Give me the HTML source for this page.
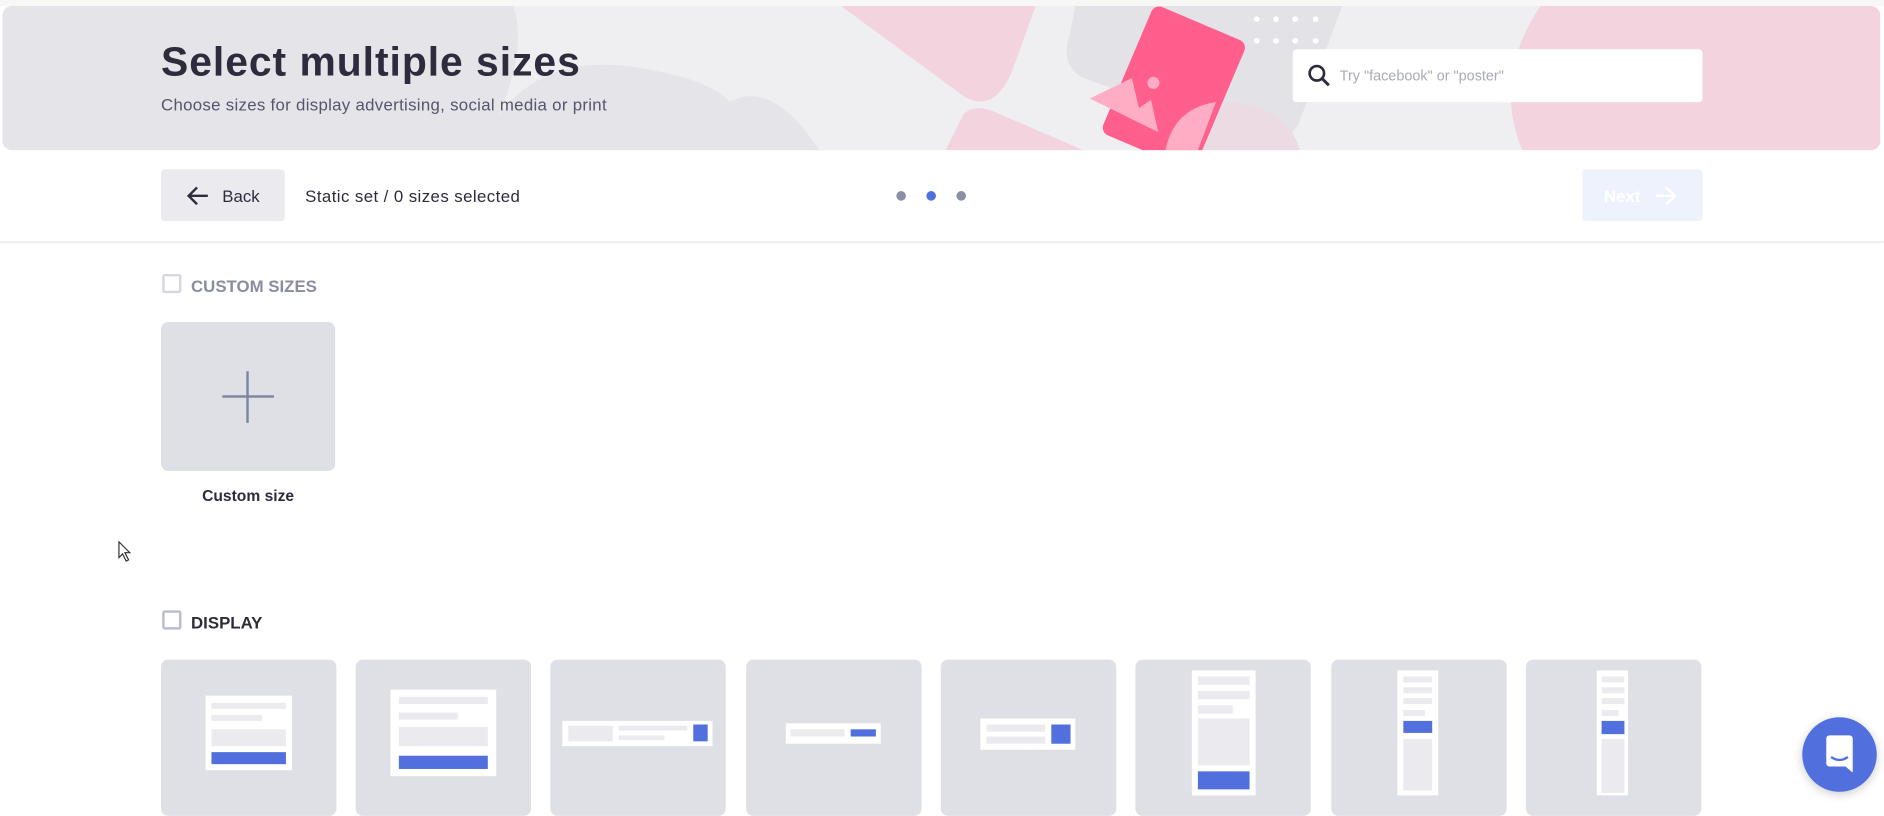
<!DOCTYPE html>
<html><head><meta charset="utf-8"><style>
html,body{margin:0;padding:0;background:#fff;overflow:hidden;width:1884px;height:801px}
#w{position:absolute;left:0;top:0;width:1568px;height:667px;transform:scale(1.2015);transform-origin:0 0;font-family:"Liberation Sans",sans-serif}
.a{position:absolute}
.tile{position:absolute;top:549px;width:146px;height:130px;background:#dfe0e6;border-radius:6px}
.wt{position:absolute;background:#fff}
.g{position:absolute;background:#ebebef}
.b{position:absolute;background:#5170dd}
</style></head><body><div id="w">
<div class="a" style="left:0;top:0;width:1568px;height:5px;background:#f7f7f8"></div>
<div class="a" style="left:2px;top:5px;width:1563px;height:120px;border-radius:8px;overflow:hidden;background:#efeff2">
<svg width="1563" height="120" style="position:absolute;left:0;top:0">
<path d="M0 0 H425 Q440 40 400 120 H0Z" fill="#e4e4e9"/>
<path d="M398 120 Q430 40 520 50 Q590 60 605 80 Q640 60 680 120Z" fill="#e4e4e9"/>
<path d="M698 0 H860 L840 55 Q825 90 800 75 Z" fill="#f2d3de"/>
<path d="M785 120 L800 90 Q810 80 830 90 L900 120Z" fill="#f2d3de"/>
<path d="M893 0 H1115 L1080 95 Q1070 118 1045 110 L900 60 Q880 50 888 25Z" fill="#e2e2e7"/>
<path d="M975 120 Q990 80 1025 80 Q1070 85 1080 120Z" fill="#ecdbe3"/>
<path d="M1280 0 H1563 V120 H1265 Q1240 60 1280 0Z" fill="#f2d3de"/>
<g transform="translate(975 68) rotate(23)"><rect x="-42" y="-58" width="84" height="116" rx="7" fill="#ff5f8c"/></g>
<path d="M905 77 L940 60 L946 85 L956 78 L962 105 Z" fill="#ffadc4"/>
<circle cx="958" cy="64" r="5" fill="#ffadc4"/>
<path d="M968 120 Q975 85 1010 80 L995 120Z" fill="#ffadc4"/>
<g fill="#fff"><circle cx="1044" cy="11" r="2.4"/><circle cx="1060" cy="11" r="2.4"/><circle cx="1076" cy="11" r="2.4"/><circle cx="1093" cy="11" r="2.4"/><circle cx="1044" cy="29" r="2.4"/><circle cx="1060" cy="29" r="2.4"/><circle cx="1076" cy="29" r="2.4"/><circle cx="1093" cy="29" r="2.4"/></g>
</svg>
</div>
<div class="a" style="left:134px;top:33px;font-size:34px;font-weight:bold;color:#2e2b3d;letter-spacing:0.8px">Select multiple sizes</div>
<div class="a" style="left:134px;top:79px;font-size:14px;color:#55566a;letter-spacing:0.25px">Choose sizes for display advertising, social media or print</div>
<div class="a" style="left:1076px;top:41px;width:341px;height:44px;background:#fff;border-radius:3px">
<svg width="22" height="22" style="position:absolute;left:12px;top:12px"><circle cx="8" cy="8" r="6" fill="none" stroke="#2e2b3d" stroke-width="2.2"/><path d="M12.5 12.5 L18 18" stroke="#2e2b3d" stroke-width="2.4"/></svg>
<div class="a" style="left:39px;top:15px;font-size:12px;color:#a9aab8">Try "facebook" or "poster"</div></div>
<div class="a" style="left:134px;top:141px;width:103px;height:43px;background:#ebebef;border-radius:3px">
<svg width="22" height="20" style="position:absolute;left:20px;top:12px"><path d="M19 10 H3 M10 3 L3 10 L10 17" fill="none" stroke="#2e2b3d" stroke-width="2"/></svg>
<div class="a" style="left:51px;top:14px;font-size:14px;color:#2e2b3d">Back</div></div>
<div class="a" style="left:254px;top:155px;font-size:14px;color:#2e2b3d;letter-spacing:0.35px">Static set / 0 sizes selected</div>
<div class="a" style="left:746px;top:159px;width:8px;height:8px;border-radius:50%;background:#8a8fa3"></div>
<div class="a" style="left:771px;top:159px;width:8px;height:8px;border-radius:50%;background:#4f6fdc"></div>
<div class="a" style="left:796px;top:159px;width:8px;height:8px;border-radius:50%;background:#8a8fa3"></div>
<div class="a" style="left:1317px;top:141px;width:100px;height:43px;background:#eef2fc;border-radius:3px">
<div class="a" style="left:18px;top:14px;font-size:14px;color:#fff;font-weight:bold">Next</div>
<svg width="22" height="20" style="position:absolute;left:58px;top:12px"><path d="M3 10 H19 M12 3 L19 10 L12 17" fill="none" stroke="#fff" stroke-width="2"/></svg></div>
<div class="a" style="left:0;top:201px;width:1568px;height:1px;background:#e5e5ea"></div>
<div class="a" style="left:135px;top:228px;width:12px;height:12px;border:2px solid #d5d6de;border-radius:2px"></div>
<div class="a" style="left:159px;top:230px;font-size:14px;font-weight:bold;color:#8a8ca0">CUSTOM SIZES</div>
<div class="a" style="left:134px;top:268px;width:145px;height:124px;background:#dfe0e5;border-radius:6px">
<div class="a" style="left:51px;top:61px;width:43px;height:2px;background:#7d84a0"></div>
<div class="a" style="left:71px;top:41px;width:2px;height:43px;background:#7d84a0"></div></div>
<div class="a" style="left:134px;top:405px;width:145px;text-align:center;font-size:13px;font-weight:bold;color:#2e2b3d">Custom size</div>
<svg class="a" style="left:98px;top:450px" width="12" height="18"><path d="M1 1 V14 L4 11 L7 17 L9 16 L6 10 H10Z" fill="#fff" stroke="#333" stroke-width="1"/></svg>
<div class="a" style="left:135px;top:508px;width:12px;height:12px;border:2px solid #b8bccc;border-radius:2px"></div>
<div class="a" style="left:159px;top:510px;font-size:14px;font-weight:bold;color:#2e2b3d">DISPLAY</div>
<div class="tile" style="left:134px"></div><div class="tile" style="left:296px"></div><div class="tile" style="left:458px"></div><div class="tile" style="left:621px"></div><div class="tile" style="left:783px"></div><div class="tile" style="left:945px"></div><div class="tile" style="left:1108px"></div><div class="tile" style="left:1270px"></div>
<div class="wt" style="left:171px;top:579px;width:72px;height:62px"></div>
<div class="g" style="left:176px;top:585px;width:62px;height:5px"></div><div class="g" style="left:176px;top:595px;width:42px;height:5px"></div><div class="g" style="left:176px;top:607px;width:62px;height:14px"></div><div class="b" style="left:176px;top:626px;width:62px;height:10px"></div>
<div class="wt" style="left:325px;top:574px;width:88px;height:72px"></div>
<div class="g" style="left:332px;top:580px;width:74px;height:6px"></div><div class="g" style="left:332px;top:593px;width:49px;height:6px"></div><div class="g" style="left:332px;top:605px;width:74px;height:16px"></div><div class="b" style="left:332px;top:629px;width:74px;height:11px"></div>
<div class="wt" style="left:468px;top:600px;width:125px;height:21px"></div>
<div class="g" style="left:473px;top:604px;width:37px;height:13px"></div><div class="g" style="left:515px;top:604px;width:57px;height:4px"></div><div class="g" style="left:515px;top:612px;width:38px;height:4px"></div><div class="b" style="left:577px;top:603px;width:12px;height:14px"></div>
<div class="wt" style="left:654px;top:602px;width:79px;height:17px"></div>
<div class="g" style="left:658px;top:607px;width:45px;height:6px"></div><div class="b" style="left:708px;top:607px;width:21px;height:6px"></div>
<div class="wt" style="left:816px;top:598px;width:79px;height:26px"></div>
<div class="g" style="left:821px;top:603px;width:49px;height:6px"></div><div class="g" style="left:821px;top:613px;width:49px;height:6px"></div><div class="b" style="left:875px;top:603px;width:16px;height:16px"></div>
<div class="wt" style="left:992px;top:558px;width:53px;height:104px"></div>
<div class="g" style="left:997px;top:563px;width:43px;height:7px"></div><div class="g" style="left:997px;top:575px;width:43px;height:7px"></div><div class="g" style="left:997px;top:587px;width:29px;height:7px"></div><div class="g" style="left:997px;top:598px;width:43px;height:39px"></div><div class="b" style="left:997px;top:642px;width:43px;height:15px"></div>
<div class="wt" style="left:1163px;top:558px;width:34px;height:104px"></div>
<div class="g" style="left:1168px;top:563px;width:24px;height:5px"></div><div class="g" style="left:1168px;top:572px;width:24px;height:5px"></div><div class="g" style="left:1168px;top:581px;width:24px;height:5px"></div><div class="g" style="left:1168px;top:591px;width:18px;height:5px"></div><div class="b" style="left:1168px;top:600px;width:24px;height:10px"></div><div class="g" style="left:1168px;top:615px;width:24px;height:43px"></div>
<div class="wt" style="left:1329px;top:558px;width:26px;height:104px"></div>
<div class="g" style="left:1333px;top:563px;width:19px;height:5px"></div><div class="g" style="left:1333px;top:572px;width:19px;height:5px"></div><div class="g" style="left:1333px;top:581px;width:19px;height:5px"></div><div class="g" style="left:1333px;top:591px;width:14px;height:5px"></div><div class="b" style="left:1333px;top:600px;width:19px;height:11px"></div><div class="g" style="left:1333px;top:615px;width:19px;height:45px"></div>
<div class="a" style="left:1500px;top:597px;width:62px;height:62px;border-radius:50%;background:#5170dd;box-shadow:0 2px 8px rgba(0,0,0,.2)">
<svg width="62" height="62"><path d="M20 18 Q20 15 23 15 H39 Q42 15 42 18 V46 L36 41 H23 Q20 41 20 38Z" fill="#fff"/><path d="M24 33 Q31 38 38 33" fill="none" stroke="#5170dd" stroke-width="2"/></svg></div>
</div></body></html>
